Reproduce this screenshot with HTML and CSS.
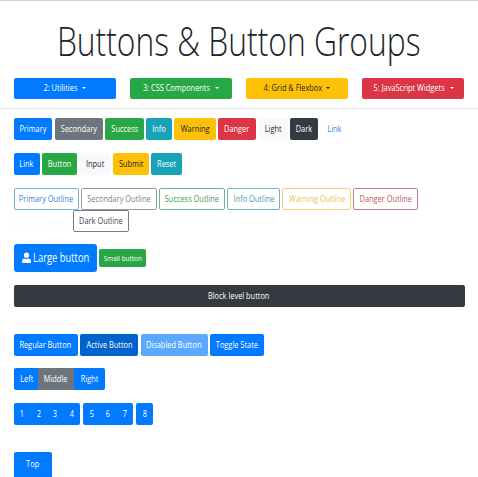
FILE: index.html
```html
<!DOCTYPE html>
<html lang="en">
<head>
<meta charset="utf-8">
<title>Buttons &amp; Button Groups</title>
<link rel="stylesheet" href="styles.css">
</head>
<body>
<header>
  <h1><span>Buttons &amp; Button Groups</span></h1>
  <nav>
    <a class="btn primary"><span>2: Utilities</span><i class="caret"></i></a>
    <a class="btn success"><span>3: CSS Components</span><i class="caret"></i></a>
    <a class="btn warning"><span>4: Grid &amp; Flexbox</span><i class="caret"></i></a>
    <a class="btn danger"><span>5: JavaScript Widgets</span><i class="caret"></i></a>
  </nav>
</header>
<main>
  <div class="row colors">
    <button class="btn primary"><span>Primary</span></button>
    <button class="btn secondary"><span>Secondary</span></button>
    <button class="btn success"><span>Success</span></button>
    <button class="btn info"><span>Info</span></button>
    <button class="btn warning"><span>Warning</span></button>
    <button class="btn danger"><span>Danger</span></button>
    <button class="btn light"><span>Light</span></button>
    <button class="btn dark"><span>Dark</span></button>
    <button class="btn link"><span>Link</span></button>
  </div>
  <div class="row elements">
    <a class="btn primary"><span>Link</span></a>
    <button class="btn success"><span>Button</span></button>
    <button class="btn light"><span>Input</span></button>
    <button class="btn warning"><span>Submit</span></button>
    <button class="btn info"><span>Reset</span></button>
  </div>
  <div class="row outlines">
    <button class="btn o-primary"><span>Primary Outline</span></button>
    <button class="btn o-secondary"><span>Secondary Outline</span></button>
    <button class="btn o-success"><span>Success Outline</span></button>
    <button class="btn o-info"><span>Info Outline</span></button>
    <button class="btn o-warning"><span>Warning Outline</span></button>
    <button class="btn o-danger"><span>Danger Outline</span></button>
  </div>
  <div class="row outlines-more">
    <button class="btn o-light"><span>Light Outline</span></button>
    <button class="btn o-dark"><span>Dark Outline</span></button>
  </div>
  <div class="row sizes">
    <button class="btn primary large"><svg viewBox="0 0 448 512"><path fill="currentColor" d="M224 256a128 128 0 1 0 0-256 128 128 0 0 0 0 256zm96 32c-60 36-132 36-192 0C57 288 0 345 0 416v48c0 27 21 48 48 48h352c27 0 48-21 48-48v-48c0-71-57-128-128-128z"/></svg><span>Large button</span></button>
    <button class="btn success small"><span>Small button</span></button>
  </div>
  <button class="btn dark block"><span>Block level button</span></button>
  <div class="row states">
    <button class="btn primary"><span>Regular Button</span></button>
    <button class="btn primary active"><span>Active Button</span></button>
    <button class="btn primary disabled"><span>Disabled Button</span></button>
    <button class="btn primary"><span>Toggle State</span></button>
  </div>
  <div class="group positions">
    <button class="btn primary"><span>Left</span></button>
    <button class="btn secondary"><span>Middle</span></button>
    <button class="btn primary"><span>Right</span></button>
  </div>
  <div class="toolbar">
    <div class="group">
      <button class="btn primary"><span>1</span></button>
      <button class="btn primary"><span>2</span></button>
      <button class="btn primary"><span>3</span></button>
      <button class="btn primary"><span>4</span></button>
    </div>
    <div class="group">
      <button class="btn primary"><span>5</span></button>
      <button class="btn primary"><span>6</span></button>
      <button class="btn primary"><span>7</span></button>
    </div>
    <div class="group">
      <button class="btn primary"><span>8</span></button>
    </div>
  </div>
  <button class="btn primary top"><span>Top</span></button>
</main>
</body>
</html>
```
FILE: styles.css
```css
* { box-sizing: border-box; }
html { overflow: hidden; }
body {
  margin: 0;
  height: 477px;
  overflow: hidden;
  background: #fff;
  border-top: 1px solid #cfcfcf;
  font-family: "Open Sans", "Noto Sans", sans-serif;
  color: #212529;
}
header {
  height: 108px;
  border-bottom: 1px solid #e6e6e6;
}
h1 {
  display: flex;
  justify-content: center;
  margin: 0;
  height: 76.5px;
  padding-top: 10px;
  font-size: 40px;
  line-height: 60px;
  font-weight: 300;
  white-space: nowrap;
}
h1 span { transform: scaleX(.795); }
nav {
  display: grid;
  grid-template-columns: repeat(4, 102px);
  justify-content: space-between;
  padding: 0 13.7px;
}
.btn {
  display: flex;
  align-items: center;
  justify-content: center;
  min-width: 0;
  height: 22px;
  margin: 0;
  padding: 0;
  border: 0;
  border-radius: 2px;
  font: 400 9.8px/14px "Open Sans", "Noto Sans", sans-serif;
  color: #fff;
  white-space: nowrap;
}
.btn span { flex: none; transform: scaleX(.755); }
nav .btn { height: 21px; }
nav .btn span { margin: 0 -10px; }
.caret {
  margin-left: 4px;
  border: 2.8px solid transparent;
  border-top-color: currentColor;
  border-bottom: 0;
}
nav .btn:nth-child(1) span { margin: 0 -5px; }
main { padding: 9px 13.6px 0; }
.row { display: grid; column-gap: 2.2px; justify-content: start; height: 22px; }
.colors { grid-template-columns: 38.8px 48.5px 38.5px 26.3px 41.3px 38px 29.5px 28.5px 27px; }
.elements { grid-template-columns: 26.5px 35.2px 31px 36px 31px; margin-top: 13px; }
.outlines { grid-template-columns: 65.5px 75.5px 66px 53px 68.8px 65px; margin-top: 13px; }
.outlines-more { grid-template-columns: 56.8px 56px; margin-top: -.5px; }
.sizes { grid-template-columns: 83px 47px; align-items: center; height: 28px; margin-top: 12.5px; }
.states { grid-template-columns: 64px 58.7px 67px 54.5px; margin-top: 27px; }

.primary { background: #007bff; }
.secondary { background: #6c757d; }
.success { background: #28a745; }
.info { background: #17a2b8; }
.warning { background: #ffc107; color: #212529; }
.danger { background: #dc3545; }
.light { background: #f8f9fa; color: #212529; }
.dark { background: #343a40; }
.link { background: none; color: #3b84d8; }
[class*="o-"] { background: #fff; border: 1px solid; }
.o-primary { color: #3583d4; border-color: #79b0e8; }
.o-secondary { color: #7c8085; border-color: #979b9f; }
.o-success { color: #469b5a; border-color: #74b783; }
.o-info { color: #3d9baa; border-color: #6cb6c1; }
.o-warning { color: #ecc252; border-color: #efd279; }
.o-danger { color: #c3535e; border-color: #cf7c84; }
.o-light { color: #f8f9fa; border-color: #fcfcfd; }
.o-dark { color: #43474b; border-color: #777b7f; }

.large { height: 28px; font-size: 12.4px; border-radius: 3px; }
.large svg { width: 9px; height: 11.5px; margin-right: 2.5px; }
.large span { margin: 0 -9.5px; }
.small { height: 18px; font-size: 8px; }
.small span { transform: scaleX(.8); }
.block { width: 451px; margin-top: 12.7px; }
.active { background: #0062cc; }
.disabled { background: #5aa9ff; }
.group { display: flex; }
.group .btn { border-radius: 0; }
.group .btn:first-child { border-radius: 2px 0 0 2px; }
.group .btn:last-child { border-radius: 0 2px 2px 0; }
.group .btn:only-child { border-radius: 2px; }
.positions { margin-top: 12.8px; }
.positions .btn { width: 31px; }
.positions .btn:first-child { width: 24.5px; padding-left: 1.5px; }
.positions .secondary { width: 36px; }
.toolbar { display: flex; gap: 3.7px; margin-top: 13px; }
.toolbar .btn { width: 16.5px; }
.top { width: 38px; height: 30px; margin-top: 26.5px; padding: 0 0 6px; border-radius: 2px 2px 0 0; }
```
